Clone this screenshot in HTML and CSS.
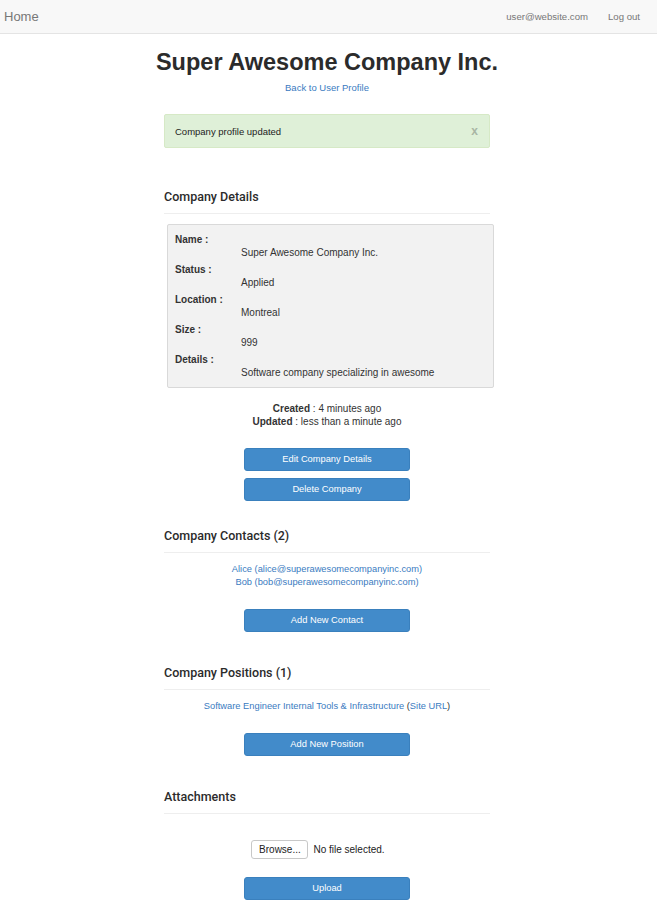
FILE: index.html
```html
<!DOCTYPE html>
<html>
<head>
<meta charset="utf-8">
<title>Super Awesome Company Inc.</title>
<link rel="stylesheet" href="styles.css">
</head>
<body>
<nav class="navbar">
  <a class="brand" href="#">Home</a>
  <div class="nav-right">
    <a class="nav-link" href="#">user@website.com</a>
    <a class="nav-link" href="#">Log out</a>
  </div>
</nav>
<main class="container">
  <h1 class="title">Super Awesome Company Inc.</h1>
  <div class="back"><a href="#">Back to User Profile</a></div>

  <div class="alert">
    <span>Company profile updated</span>
    <span class="close">x</span>
  </div>

  <h4 class="section-head first">Company Details</h4>
  <dl class="details">
    <dt>Name :</dt>
    <dd>Super Awesome Company Inc.</dd>
    <dt>Status :</dt>
    <dd>Applied</dd>
    <dt>Location :</dt>
    <dd>Montreal</dd>
    <dt>Size :</dt>
    <dd>999</dd>
    <dt>Details :</dt>
    <dd>Software company specializing in awesome</dd>
  </dl>

  <div class="meta">
    <div><b>Created</b> : 4 minutes ago</div>
    <div><b>Updated</b> : less than a minute ago</div>
  </div>

  <div class="btn-stack">
    <a class="btn" href="#">Edit Company Details</a>
    <a class="btn" href="#">Delete Company</a>
  </div>

  <h4 class="section-head after-btns">Company Contacts (2)</h4>
  <div class="list">
    <div><a href="#">Alice (alice@superawesomecompanyinc.com)</a></div>
    <div><a href="#">Bob (bob@superawesomecompanyinc.com)</a></div>
  </div>
  <div class="btn-stack">
    <a class="btn" href="#">Add New Contact</a>
  </div>

  <h4 class="section-head">Company Positions (1)</h4>
  <div class="list">
    <div><a href="#">Software Engineer Internal Tools &amp; Infrastructure</a> (<a href="#">Site URL</a>)</div>
  </div>
  <div class="btn-stack">
    <a class="btn" href="#">Add New Position</a>
  </div>

  <h4 class="section-head">Attachments</h4>
  <div class="file-row">
    <span class="browse">Browse...</span>
    <span class="file-none">No file selected.</span>
  </div>
  <div class="btn-stack upload">
    <a class="btn" href="#">Upload</a>
  </div>
</main>
</body>
</html>
```

FILE: styles.css
```css
* { box-sizing: border-box; }
html, body {
  margin: 0;
  padding: 0;
  background: #fff;
}
body {
  font-family: "Liberation Sans", Arial, Helvetica, sans-serif;
  font-size: 10px;
  line-height: 13px;
  color: #333;
}
a { color: #3a7bbf; text-decoration: none; }

.navbar {
  height: 34px;
  background: #f8f8f8;
  border-bottom: 1px solid #e4e4e4;
  display: flex;
  align-items: center;
  justify-content: space-between;
  padding: 0 17px 0 4px;
}
.brand {
  color: #777;
  font-size: 13px;
}
.nav-right {
  display: flex;
  gap: 20px;
}
.nav-link {
  color: #777;
  font-size: 9.6px;
}

.container {
  width: 326px;
  margin: 0 0 0 calc(50% - 164.5px);
  padding-bottom: 20px;
}
.title {
  margin: 13px -40px 0;
  text-align: center;
  font-size: 23.5px;
  line-height: 30px;
  font-weight: bold;
  color: #2b2b2b;
}
.back {
  text-align: center;
  margin-top: 4px;
  font-size: 9.5px;
}

.alert {
  margin-top: 20px;
  height: 34px;
  background: #dff0d8;
  border: 1px solid #d6e9c6;
  border-radius: 2px;
  display: flex;
  align-items: center;
  justify-content: space-between;
  padding: 0 11px 0 10px;
  color: #222;
  font-size: 9.5px;
}
.close {
  color: #a9b5a4;
  font-size: 12px;
  font-weight: bold;
}

.section-head {
  margin: 32px 0 0;
  font-family: Roboto, "Liberation Sans", Arial, sans-serif;
  font-size: 12.5px;
  line-height: 16px;
  font-weight: 500;
  color: #2b2b2b;
  padding: 1px 0 8px;
  border-bottom: 1px solid #eee;
}
.section-head.first { margin-top: 40px; }
.section-head.after-btns { margin-top: 26px; }

.details {
  margin: 10px 0 0 3px;
  width: 327px;
  background: #f2f2f2;
  border: 1px solid #d9d9d9;
  border-radius: 2px;
  padding: 8px 7px 4px;
}
.details dt {
  font-weight: bold;
}
.details dd {
  margin: 0 0 4px 66px;
}

.meta {
  margin-top: 14px;
  text-align: center;
}

.btn-stack {
  margin-top: 20px;
  display: flex;
  flex-direction: column;
  align-items: center;
  gap: 7px;
}
.btn {
  width: 166px;
  height: 23px;
  background: #428bca;
  border: 1px solid #3a80bd;
  border-radius: 3px;
  color: #fff;
  font-size: 9.3px;
  display: flex;
  align-items: center;
  justify-content: center;
}

.list {
  margin-top: 10px;
  text-align: center;
  font-size: 9.3px;
}

.file-row {
  margin-top: 26px;
  display: flex;
  align-items: center;
  justify-content: center;
  gap: 5px;
  padding-right: 18px;
}
.browse {
  width: 57px;
  height: 19px;
  border: 1px solid #c8c8c8;
  border-radius: 3px;
  background: #fff;
  display: flex;
  align-items: center;
  justify-content: center;
  color: #222;
}
.file-none { color: #222; }
.upload { margin-top: 18px; }
```
